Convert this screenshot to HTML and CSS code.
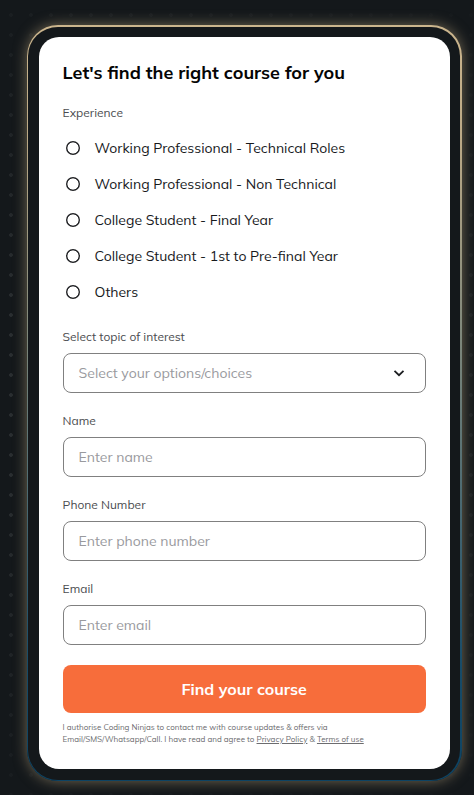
FILE: index.html
```html
<!DOCTYPE html>
<html lang="en">
<head>
<meta charset="utf-8">
<meta name="viewport" content="width=device-width, initial-scale=1">
<title>Find your course</title>
<link rel="stylesheet" href="styles.css">
</head>
<body>
<main class="frame">
  <form class="card">
    <h1 class="title">Let's find the right course for you</h1>
    <p class="label experience">Experience</p>
    <div class="options">
      <label class="option"><input type="radio" name="experience"><span>Working Professional - Technical Roles</span></label>
      <label class="option"><input type="radio" name="experience"><span>Working Professional - Non Technical</span></label>
      <label class="option"><input type="radio" name="experience"><span>College Student - Final Year</span></label>
      <label class="option"><input type="radio" name="experience"><span>College Student - 1st to Pre-final Year</span></label>
      <label class="option"><input type="radio" name="experience"><span>Others</span></label>
    </div>
    <div class="field">
      <span class="label">Select topic of interest</span>
      <div class="control"><span>Select your options/choices</span>
        <svg width="12" height="8" viewBox="0 0 12 8"><path d="M1.500 1.900 6 6.200l4.500-4.300" fill="none" stroke="#1b1d20" stroke-width="1.800"/></svg>
      </div>
    </div>
    <div class="field">
      <span class="label">Name</span>
      <div class="control"><span>Enter name</span></div>
    </div>
    <div class="field">
      <span class="label">Phone Number</span>
      <div class="control"><span>Enter phone number</span></div>
    </div>
    <div class="field">
      <span class="label">Email</span>
      <div class="control"><span>Enter email</span></div>
    </div>
    <button class="submit" type="button">Find your course</button>
    <p class="consent">I authorise Coding Ninjas to contact me with course updates &amp; offers via<br>Email/SMS/Whatsapp/Call. I have read and agree to <u>Privacy Policy</u> &amp; <u>Terms of use</u></p>
  </form>
</main>
</body>
</html>
```
FILE: styles.css
```css
* { box-sizing: border-box; }
body {
  margin: 0;
  height: 795px;
  overflow: hidden;
  padding: 25px 12px 0 26.6px;
  background:
    linear-gradient(to right, rgba(20,24,27,0) 20%, rgba(20,24,27,.6)),
    linear-gradient(to bottom, rgba(20,24,27,.75), rgba(20,24,27,0) 40%, rgba(20,24,27,0) 60%, rgba(20,24,27,.8)),
    radial-gradient(circle at 11px 15px, #2a2e31 0 1.500px, transparent 2.200px) 0 0 / 20px 20px,
    #14181b;
  font-family: Mulish, Muli, "Noto Sans", sans-serif;
  color: #17191c;
}
.frame {
  width: 435px;
  height: 756px;
  padding: 10px 10px 11px 11px;
  border: solid transparent;
  border-width: 2px 2px 1px 1px;
  border-radius: 31px;
  background:
    linear-gradient(#14181b, #14181b) padding-box,
    linear-gradient(to bottom, #cbb58d 0%, #bba986 15%, #6e7e78 48%, #174b68 85%, #0d4363 100%) border-box;
  box-shadow: 0 0 14px 0 rgba(205,181,137,.5);
}
.card {
  width: 411px;
  height: 732px;
  padding: 24px 24px 0;
  border-radius: 20px;
  background: #fff;
}
.title {
  margin: 0;
  font-size: 18px;
  line-height: 24px;
  font-weight: 700;
  color: #050505;
  white-space: nowrap;
}
.label {
  display: block;
  margin: 0;
  font-size: 12px;
  line-height: 16px;
  color: #4b4d50;
}
.experience { margin-top: 20px; }
.options { margin-top: 9px; }
.option {
  display: flex;
  align-items: center;
  height: 36px;
  font-size: 14px;
  line-height: 20px;
}
.option input {
  appearance: none;
  width: 14px;
  height: 14px;
  margin: 0 15px 0 3px;
  border-radius: 50%;
  background: radial-gradient(circle closest-side, transparent 5.200px, #202124 5.900px);
}
.field { height: 84px; }
.options + .field { margin-top: 19px; }
.control {
  display: flex;
  align-items: center;
  justify-content: space-between;
  height: 40px;
  margin-top: 8px;
  padding: 0 20px 0 15px;
  border: 1px solid #808080;
  border-radius: 8px;
  font-size: 14px;
  color: #999a9e;
}
.submit {
  display: block;
  width: 100%;
  height: 48px;
  border: 0;
  border-radius: 8px;
  background: #f76d3b;
  color: #fff;
  font: 700 16px/24px Mulish, Muli, "Noto Sans", sans-serif;
}
.consent {
  margin: 8px 0 0;
  font-size: 8px;
  line-height: 12px;
  color: #6c6c6f;
  white-space: nowrap;
}
```
